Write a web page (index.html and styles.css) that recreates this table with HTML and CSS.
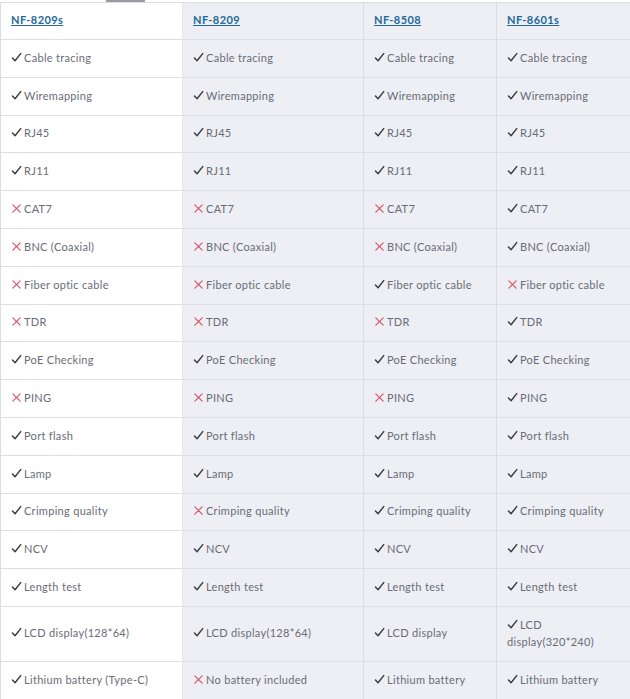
FILE: index.html
```html
<!DOCTYPE html>
<html>
<head>
<meta charset="utf-8">
<link rel="stylesheet" href="styles.css">
</head>
<body>
<svg class="defs" width="0" height="0" aria-hidden="true">
  <symbol id="ck" viewBox="0 0 12 12"><path d="M1.6 6.6 L4.4 9.6 L10.6 1.8" fill="none" stroke="currentColor" stroke-width="1.6" stroke-linecap="round" stroke-linejoin="round"/></symbol>
  <symbol id="xx" viewBox="0 0 12 12"><path d="M2 2 L10 10 M10 2 L2 10" fill="none" stroke="currentColor" stroke-width="1.3" stroke-linecap="round"/></symbol>
</svg>
<div class="topbar"><div class="tab"></div></div>
<div class="grid" id="grid">
  <div class="cell c1 head"><a href="#">NF-8209s</a></div>
  <div class="cell c2 head"><a href="#">NF-8209</a></div>
  <div class="cell c3 head"><a href="#">NF-8508</a></div>
  <div class="cell c4 head"><a href="#">NF-8601s</a></div>
</div>
<script src="script.js"></script>
</body>
</html>
```

FILE: script.js
```js
const rows = [
  [["y","Cable tracing"],["y","Cable tracing"],["y","Cable tracing"],["y","Cable tracing"]],
  [["y","Wiremapping"],["y","Wiremapping"],["y","Wiremapping"],["y","Wiremapping"]],
  [["y","RJ45"],["y","RJ45"],["y","RJ45"],["y","RJ45"]],
  [["y","RJ11"],["y","RJ11"],["y","RJ11"],["y","RJ11"]],
  [["n","CAT7"],["n","CAT7"],["n","CAT7"],["y","CAT7"]],
  [["n","BNC (Coaxial)"],["n","BNC (Coaxial)"],["n","BNC (Coaxial)"],["y","BNC (Coaxial)"]],
  [["n","Fiber optic cable"],["n","Fiber optic cable"],["y","Fiber optic cable"],["n","Fiber optic cable"]],
  [["n","TDR"],["n","TDR"],["n","TDR"],["y","TDR"]],
  [["y","PoE Checking"],["y","PoE Checking"],["y","PoE Checking"],["y","PoE Checking"]],
  [["n","PING"],["n","PING"],["n","PING"],["y","PING"]],
  [["y","Port flash"],["y","Port flash"],["y","Port flash"],["y","Port flash"]],
  [["y","Lamp"],["y","Lamp"],["y","Lamp"],["y","Lamp"]],
  [["y","Crimping quality"],["n","Crimping quality"],["y","Crimping quality"],["y","Crimping quality"]],
  [["y","NCV"],["y","NCV"],["y","NCV"],["y","NCV"]],
  [["y","Length test"],["y","Length test"],["y","Length test"],["y","Length test"]],
  [["y","LCD display(128*64)"],["y","LCD display(128*64)"],["y","LCD display"],["y","LCD display(320*240)"]],
  [["y","Lithium battery (Type-C)"],["n","No battery included"],["y","Lithium battery"],["y","Lithium battery"]]
];
const grid = document.getElementById("grid");
rows.forEach(r => {
  r.forEach((c, i) => {
    const d = document.createElement("div");
    d.className = "cell c" + (i + 1);
    const p = document.createElement("span");
    p.className = "txt";
    const ic = c[0] === "y" ? "ck" : "xx";
    p.innerHTML = '<svg class="ic ' + (c[0] === "y" ? "yes" : "no") + '"><use href="#' + ic + '"/></svg>';
    p.appendChild(document.createTextNode(c[1]));
    d.appendChild(p);
    grid.appendChild(d);
  });
});
```

FILE: styles.css
```css
html, body {
  margin: 0;
  padding: 0;
  background: #ffffff;
}
body {
  font-family: Lato, "Noto Sans", sans-serif;
  font-size: 11px;
  letter-spacing: 0.3px;
  color: #696c77;
  width: 630px;
  height: 699px;
  overflow: hidden;
}
.defs {
  position: absolute;
  width: 0;
  height: 0;
}
.topbar {
  height: 2px;
  display: flex;
}
.tab {
  margin-left: 106px;
  width: 39px;
  height: 2px;
  background: #9a9aa0;
}
.grid {
  display: grid;
  grid-template-columns: 182px 181px 133px 134px;
  grid-template-rows: 37px repeat(15, 37.8px) 55px 38px;
  border-top: 1px solid #dcdde4;
  border-left: 1px solid #dcdde4;
  box-sizing: border-box;
  height: 697px;
}
.cell {
  display: flex;
  align-items: center;
  padding: 0 8px 2px 10px;
  border-bottom: 1px solid #dcdde5;
  border-right: 1px solid #dcdde5;
  background: #eeeff4;
  line-height: 17px;
  box-sizing: border-box;
}
.c1 {
  background: #ffffff;
  border-right-color: #e6e7ec;
}
.head {
  padding-bottom: 3px;
}
.head a {
  color: #23699a;
  font-weight: 700;
  text-decoration: underline;
  font-size: 11px;
  letter-spacing: 0.4px;
}
.ic {
  width: 11px;
  height: 11px;
  vertical-align: -1px;
  margin-right: 2px;
}
.ic.yes {
  color: #3a3c44;
}
.ic.no {
  color: #d4546a;
}
```
